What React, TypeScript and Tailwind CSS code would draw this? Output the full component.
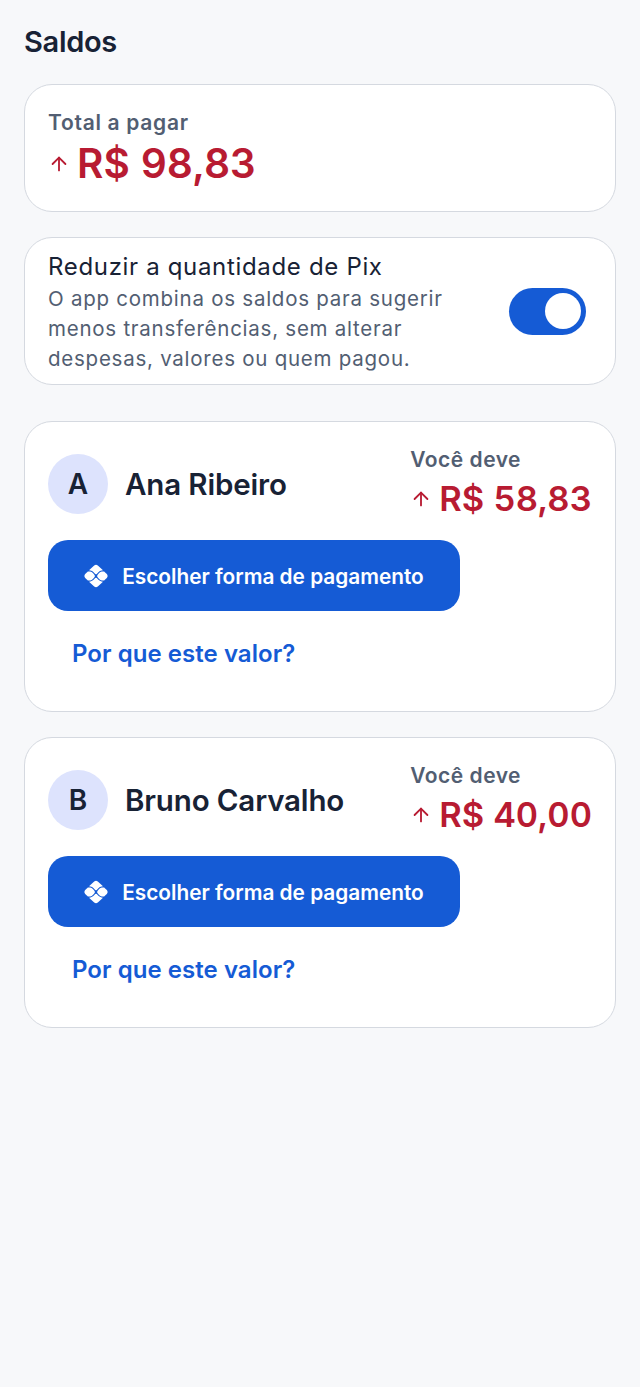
import { ArrowUp } from "lucide-react";

const people = [
  { initial: "A", name: "Ana Ribeiro", amount: "R$ 58,83" },
  { initial: "B", name: "Bruno Carvalho", amount: "R$ 40,00" },
];

function PixIcon() {
  return (
    <svg width="24" height="24" viewBox="0 0 24 24" fill="white">
      <path d="M10.2 1.4 Q12 0.2 13.8 1.4 L19 6.3 L17.6 6.6 Q15.8 6.8 14.4 8.2 L12.8 9.9 Q12 10.6 11.2 9.9 L9.6 8.2 Q8.2 6.8 6.4 6.6 L5 6.3Z" />
      <path d="M10.2 22.6 Q12 23.8 13.8 22.6 L19 17.7 L17.6 17.4 Q15.8 17.2 14.4 15.8 L12.8 14.1 Q12 13.4 11.2 14.1 L9.6 15.8 Q8.2 17.2 6.4 17.4 L5 17.7Z" />
      <path d="M3.9 7.4 L6.2 7.6 Q7.8 7.8 8.9 9 L10.4 10.7 Q11.4 12 10.4 13.3 L8.9 15 Q7.8 16.2 6.2 16.4 L3.9 16.6 L1.2 13.9 Q-0.4 12 1.2 10.1Z" />
      <path d="M20.1 7.4 L17.8 7.6 Q16.2 7.8 15.1 9 L13.6 10.7 Q12.6 12 13.6 13.3 L15.1 15 Q16.2 16.2 17.8 16.4 L20.1 16.6 L22.8 13.9 Q24.4 12 22.8 10.1Z" />
    </svg>
  );
}

function PersonCard({ initial, name, amount }: { initial: string; name: string; amount: string }) {
  return (
    <div className="h-[291px] rounded-[28px] border border-[#d5d9e0] bg-white px-[23px] pt-[23px]">
      <div className="flex items-start justify-between">
        <div className="mt-[9px] flex items-center gap-[17px]">
          <div className="flex h-[60px] w-[60px] items-center justify-center rounded-full bg-[#dde3fd] text-[28px] font-semibold text-[#182235]">
            {initial}
          </div>
          <span className="text-[29.5px] font-semibold tracking-[-0.15px] text-[#182235]">{name}</span>
        </div>
        <div className="flex flex-col items-start">
          <span className="text-[21px] leading-[30px] font-semibold tracking-[0.5px] text-[#525e72]">Você deve</span>
          <div className="mt-[3px] flex items-center gap-[7px]">
            <ArrowUp size={22} strokeWidth={2} className="text-[#b81b32]" />
            <span className="text-[34.5px] leading-[42px] font-semibold text-[#b81b32] tabular-nums">{amount}</span>
          </div>
        </div>
      </div>
      <button className="mt-[20px] flex h-[71px] w-[412px] items-center justify-center gap-[14px] rounded-[20px] bg-[#155bd5] text-[20.8px] font-semibold text-white">
        <PixIcon />
        <span className="pt-[2px]">Escolher forma de pagamento</span>
      </button>
      <div className="mt-[25px] px-6 text-[24px] leading-[36px] font-semibold tracking-[0.05px] text-[#155bd5]">Por que este valor?</div>
    </div>
  );
}

export default function App() {
  return (
    <div className="min-h-[1387px] bg-[#f7f8fa] px-6 pt-[21px] font-['Inter',sans-serif]">
      <h1 className="text-[29px] leading-[42px] font-semibold tracking-[-0.3px] text-[#182235]">Saldos</h1>

      <div className="mt-[21px] h-[128px] rounded-[28px] border border-[#d5d9e0] bg-white px-[23px] pt-[24px]">
        <div className="text-[21px] leading-[28px] font-semibold tracking-[0.7px] text-[#525e72]">Total a pagar</div>
        <div className="flex items-center gap-[7px]">
          <ArrowUp size={22} strokeWidth={2} className="text-[#b81b32]" />
          <span className="text-[40.5px] leading-[53px] font-semibold text-[#b81b32] tabular-nums">R$ 98,83</span>
        </div>
      </div>

      <div className="mt-[25px] flex h-[148px] items-center justify-between rounded-[28px] border border-[#d5d9e0] bg-white pr-[29px] pl-[23px]">
        <div className="pt-[3px]">
          <div className="text-[24px] leading-[30px] tracking-[0.67px] text-[#182235]">Reduzir a quantidade de Pix</div>
          <div className="mt-[2px] w-[430px] text-[20.5px] leading-[30px] tracking-[0.75px] text-[#525e72]">
            O app combina os saldos para sugerir menos transferências, sem alterar despesas, valores ou quem pagou.
          </div>
        </div>
        <div className="flex h-[47px] w-[77px] items-center justify-end rounded-full bg-[#155bd5] pr-[5px]">
          <div className="h-9 w-9 rounded-full bg-white" />
        </div>
      </div>

      <div className="mt-9 flex flex-col gap-[25px]">
        {people.map((p) => (
          <PersonCard key={p.initial} {...p} />
        ))}
      </div>
    </div>
  );
}
